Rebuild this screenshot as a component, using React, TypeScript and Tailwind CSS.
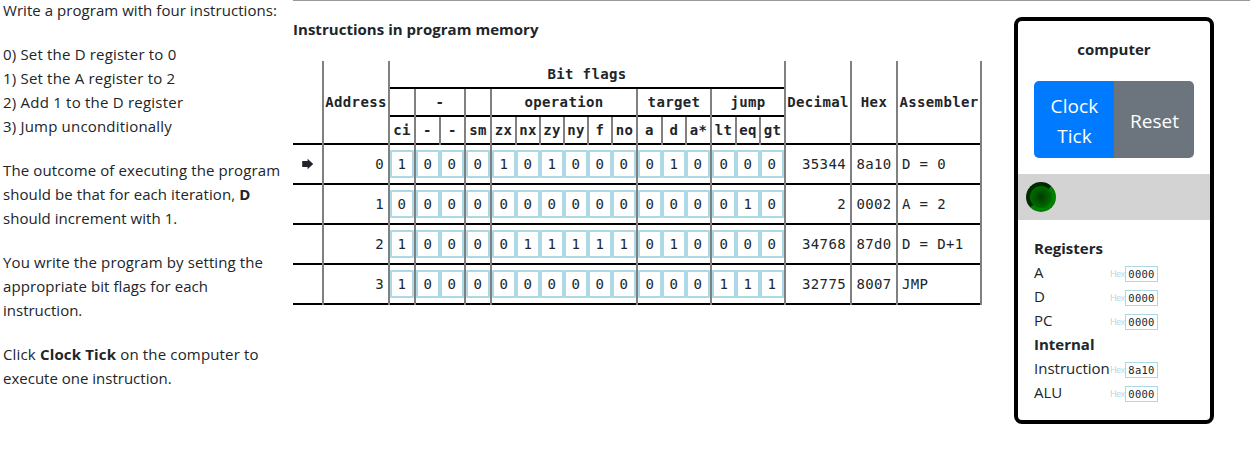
import React from "react";

const sans = "font-['Open_Sans','Noto_Sans',sans-serif]";
const mono = "font-['DejaVu_Sans_Mono','Liberation_Mono',monospace]";

type Line = { spacing: string; content: React.ReactNode };

const paragraphs: Line[][] = [
  [{ spacing: "tracking-[0.05px]", content: "Write a program with four instructions:" }],
  [
    { spacing: "tracking-[0.18px]", content: "0) Set the D register to 0" },
    { spacing: "tracking-[0.19px]", content: "1) Set the A register to 2" },
    { spacing: "tracking-[0.22px]", content: "2) Add 1 to the D register" },
    { spacing: "tracking-[0.19px]", content: "3) Jump unconditionally" },
  ],
  [
    { spacing: "tracking-[0.12px]", content: "The outcome of executing the program" },
    { spacing: "tracking-[0.08px]", content: <>should be that for each iteration, <b>D</b></> },
    { spacing: "tracking-[0.04px]", content: "should increment with 1." },
  ],
  [
    { spacing: "tracking-[0.11px]", content: "You write the program by setting the" },
    { spacing: "tracking-[0.08px]", content: "appropriate bit flags for each" },
    { spacing: "tracking-[0px]", content: "instruction." },
  ],
  [
    { spacing: "tracking-[0.16px]", content: <>Click <b>Clock Tick</b> on the computer to</> },
    { spacing: "tracking-[0px]", content: "execute one instruction." },
  ],
];

const groups = [
  { title: "", width: "w-[24px]", flags: ["ci"] },
  { title: "-", width: "w-[48px]", flags: ["-", "-"] },
  { title: "", width: "w-[24px]", flags: ["sm"] },
  { title: "operation", width: "w-[144px]", flags: ["zx", "nx", "zy", "ny", "f", "no"] },
  { title: "target", width: "w-[72px]", flags: ["a", "d", "a*"] },
  { title: "jump", width: "w-[72px]", flags: ["lt", "eq", "gt"] },
];

const rows = [
  { bits: "1000101000010000", decimal: "35344", hex: "8a10", asm: "D = 0" },
  { bits: "0000000000000010", decimal: "2", hex: "0002", asm: "A = 2" },
  { bits: "1000011111010000", decimal: "34768", hex: "87d0", asm: "D = D+1" },
  { bits: "1000000000000111", decimal: "32775", hex: "8007", asm: "JMP" },
];

function Cell({ width, className = "", children }: { width: string; className?: string; children?: React.ReactNode }) {
  return (
    <div className="flex border-r-2 border-[#808080]">
      <div className={`flex items-center border-b-2 border-black whitespace-pre ${width} ${className}`}>{children}</div>
    </div>
  );
}

function flagWidth(index: number, count: number) {
  if (count === 1) return "w-[24px]";
  if (index === 0) return "w-[25px] border-r-2";
  if (index === count - 1) return "w-[23px]";
  return "w-[24px] border-r-2";
}

function HeaderGroup({ title, width, flags, last }: { title: string; width: string; flags: string[]; last: boolean }) {
  return (
    <div className={`box-content ${width} ${last ? "" : "border-r-2 border-[#808080]"}`}>
      <div className="flex h-[28px] items-center justify-center border-b-2 border-black">{title}</div>
      <div className="flex h-[28px]">
        {flags.map((flag, i) => (
          <div key={i} className={`flex border-[#808080] ${flagWidth(i, flags.length)}`}>
            <div className="flex min-w-0 flex-1 items-center justify-center border-b-2 border-black">{flag}</div>
          </div>
        ))}
      </div>
    </div>
  );
}

function InstructionRow({ index, row }: { index: number; row: (typeof rows)[number] }) {
  let offset = 0;
  return (
    <div className="flex h-[40px]">
      <Cell width="w-[29px]" className="justify-center">
        {index === 0 && (
          <svg width="12" height="12" viewBox="0 0 12 12" className="mb-px">
            <path d="M0.2 3H5.6V0.8L11.2 6L5.6 11.2V9H0.2Z" fill="#212529" />
          </svg>
        )}
      </Cell>
      <Cell width="w-[64px]" className="justify-end pr-[4px]">{index}</Cell>
      {groups.map((group, g) => {
        const bits = row.bits.slice(offset, offset + group.flags.length);
        offset += group.flags.length;
        return (
          <Cell key={g} width={group.width}>
            {bits.split("").map((bit, i) => (
              <div key={i} className="flex h-[28px] w-[24px] items-center justify-center rounded-[1px] border-2 border-[#add8e6]">{bit}</div>
            ))}
          </Cell>
        );
      })}
      <Cell width="w-[64px]" className="justify-end pr-[4px]">{row.decimal}</Cell>
      <Cell width="w-[44px]" className="justify-center">{row.hex}</Cell>
      <Cell width="w-[82px]" className="pl-[4px]">{row.asm}</Cell>
    </div>
  );
}

function ProgramTable() {
  return (
    <div className={`${mono} w-[689px] text-[14px] tracking-[0.37px]`}>
      <div className="flex h-[84px] font-bold">
        <Cell width="w-[29px]" />
        <Cell width="w-[64px]" className="justify-center">Address</Cell>
        <div className="w-[396px] border-r-2 border-[#808080]">
          <div className="flex h-[28px] items-center justify-center border-b-2 border-black">Bit flags</div>
          <div className="flex">
            {groups.map((group, i) => (
              <HeaderGroup key={i} {...group} last={i === groups.length - 1} />
            ))}
          </div>
        </div>
        <Cell width="w-[64px]" className="justify-center">Decimal</Cell>
        <Cell width="w-[44px]" className="justify-center">Hex</Cell>
        <Cell width="w-[82px]" className="justify-center">Assembler</Cell>
      </div>
      {rows.map((row, i) => (
        <InstructionRow key={i} index={i} row={row} />
      ))}
    </div>
  );
}

function Register({ name, value }: { name: string; value: string }) {
  return (
    <div className="flex h-[24px] items-center">
      <span className="w-[76px] whitespace-nowrap text-[15px]">{name}</span>
      <span className="mt-[4px] w-[15px] text-[9px] leading-[16px] tracking-[-0.6px] text-[#add8e6]">Hex</span>
      <span className={`${mono} mt-[4px] flex h-[16px] w-[33px] items-center justify-center border border-[#add8e6] text-[10.5px] tracking-[0.28px]`}>
        {value}
      </span>
    </div>
  );
}

function Computer() {
  return (
    <div className="mt-[16px] ml-[32px] h-[407px] w-[200px] rounded-[8px] border-4 border-black">
      <div className="mt-[16px] text-center text-[15px] leading-[24px] font-bold">computer</div>
      <div className="mx-[16px] mt-[20px] flex h-[77px] overflow-hidden rounded-[5px] text-[19px] leading-[30px] text-white">
        <button className="w-[80px] bg-[#007bff] pt-[2px] pl-px tracking-[0.1px]">Clock<br />Tick</button>
        <button className="w-[80px] bg-[#6c757d] pt-[2px] pl-px">Reset</button>
      </div>
      <div className="mt-[16px] flex h-[46px] items-center bg-[#d3d3d3] pl-[8px]">
        <div className="size-[30px] rounded-full border-4 border-t-[#002b00] border-r-[#008000] border-b-[#008000] border-l-[#002b00] bg-[radial-gradient(circle,#003c00,#008000)]" />
      </div>
      <div className="mt-[16px] pl-[16px] text-[15px] leading-[24px]">
        <div className="font-bold">Registers</div>
        <Register name="A" value="0000" />
        <Register name="D" value="0000" />
        <Register name="PC" value="0000" />
        <div className="font-bold">Internal</div>
        <Register name="Instruction" value="8a10" />
        <Register name="ALU" value="0000" />
      </div>
    </div>
  );
}

export default function App() {
  return (
    <div className={`${sans} flex h-[450px] w-[1250px] overflow-hidden bg-white text-[#212529]`}>
      <div className="-mt-[2px] flex w-[293px] flex-col gap-[20px] pl-[3px] text-[15px] leading-[24px] whitespace-nowrap">
        {paragraphs.map((lines, p) => (
          <div key={p}>
            {lines.map((line, i) => (
              <div key={i}><span className={line.spacing}>{line.content}</span></div>
            ))}
          </div>
        ))}
      </div>
      <div className="flex flex-1 items-start border-t border-[#999]">
        <div>
          <h1 className="mt-[16px] mb-[20px] text-[15px] leading-[24px] font-bold tracking-[0.03px]">Instructions in program memory</h1>
          <ProgramTable />
        </div>
        <Computer />
      </div>
    </div>
  );
}
